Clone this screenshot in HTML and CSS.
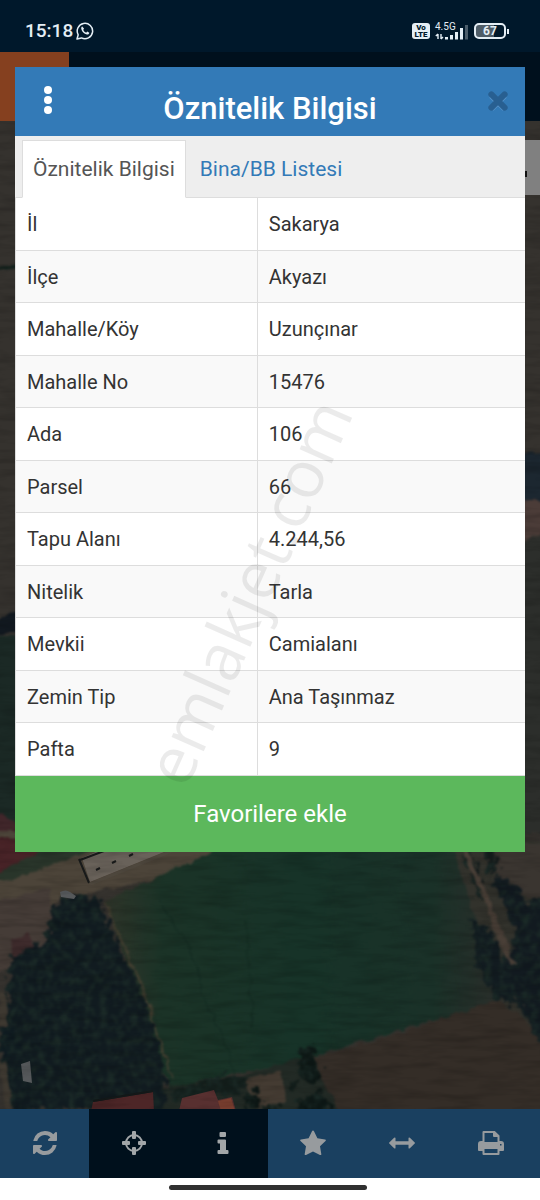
FILE: index.html
```html
<!DOCTYPE html>
<html lang="tr">
<head>
<meta charset="utf-8">
<meta name="viewport" content="width=device-width, initial-scale=1">
<title>Öznitelik Bilgisi</title>
<link rel="stylesheet" href="styles.css">
</head>
<body>
<header class="status">
  <div class="status-left">
    <span class="clock">15:18</span>
    <svg class="icon-chat" viewBox="0 0 18 18" aria-hidden="true">
      <path d="M1 17l1.200-4.200A7.700 7.700 0 1 1 5.400 15.900z" fill="none" stroke="#e4eef5" stroke-width="1.500" stroke-linejoin="round"/>
      <path d="M6.300 4.600c-.9.300-1.300 1.300-1 2.300.7 2.700 2.700 4.800 5.600 5.600 1.200.3 2.300-.4 2.400-1.700l-2.100-1.200-1.100 1.100C8.500 10 7.600 9 7.200 7.800l.9-1z" fill="#e4eef5"/>
    </svg>
  </div>
  <div class="status-right">
    <span class="volte"><span>Vo</span><span>LTE</span></span>
    <span class="network">
      <span class="network-type">4.5G</span>
      <svg class="icon-signal" viewBox="0 0 34 16" aria-hidden="true">
        <path d="M3 15v-5M.8 12L3 10M6 10v5M6 15l2-2" stroke="#e4eef5" stroke-width="1.400" fill="none"/>
        <path d="M10 13h3v2.500h-3zM15 11h3v4.500h-3zM20 8h3v7.500h-3zM25 4h3v11.500h-3z" fill="#e4eef5"/>
        <path d="M30 1h3v14.500h-3z" fill="#4b5d6b"/>
      </svg>
    </span>
    <span class="battery"><span class="battery-level">67</span></span>
  </div>
</header>

<main class="app">
  <div class="app-bar"><div class="brand"></div></div>
  <div class="map">
    <svg class="satellite" viewBox="0 121 540 988" preserveAspectRatio="xMidYMax slice" aria-hidden="true">
      <defs>
        <filter id="soft" x="-10%" y="-10%" width="120%" height="120%" color-interpolation-filters="sRGB">
          <feTurbulence type="fractalNoise" baseFrequency="0.08" numOctaves="3" seed="4" result="n"/>
          <feDisplacementMap in="SourceGraphic" in2="n" scale="9" xChannelSelector="R" yChannelSelector="G"/>
          <feGaussianBlur stdDeviation="1"/>
        </filter>
        <filter id="trees" x="-5%" y="-5%" width="110%" height="110%" color-interpolation-filters="sRGB">
          <feTurbulence type="fractalNoise" baseFrequency="0.13" numOctaves="3" seed="9" result="n"/>
          <feDisplacementMap in="SourceGraphic" in2="n" scale="18" xChannelSelector="R" yChannelSelector="G" result="s"/>
          <feColorMatrix in="n" values="0 0 0 0 0.11  0 0 0 0 0.17  0 0 0 0 0.155  2.500 0 0 0 -1" result="t"/>
          <feComposite in="t" in2="s" operator="in" result="c"/>
          <feMerge result="m"><feMergeNode in="s"/><feMergeNode in="c"/></feMerge>
          <feGaussianBlur in="m" stdDeviation="1"/>
        </filter>
        <filter id="grain" x="0" y="0" width="100%" height="100%" color-interpolation-filters="sRGB">
          <feTurbulence type="fractalNoise" baseFrequency="0.025 0.14" numOctaves="3" seed="2"/>
          <feColorMatrix values="0 0 0 0 0  0 0 0 0 0  0 0 0 0 0  1.200 0 0 0 -.5"/>
        </filter>
        <linearGradient id="field" x1="0" y1="0" x2="1" y2="0">
          <stop offset="0" stop-color="#2e3429"/><stop offset=".14" stop-color="#1b3327"/>
          <stop offset=".5" stop-color="#173328"/><stop offset=".82" stop-color="#1a3128"/><stop offset="1" stop-color="#2b2d2a"/>
        </linearGradient>
      </defs>
      <rect y="121" width="540" height="988" fill="#35322e"/>
      <g filter="url(#soft)">
        <path d="M-5 267L20 264v4l-25 3z" fill="#12211c"/>
        <path d="M-5 622l25-14v22l-25 6z" fill="#121920"/>
        <path d="M-5 636h25v200l-25-20z" fill="#1b2925"/>
        <path d="M-5 812l25 12v24l-25-8z" fill="#40262a"/>
        <path d="M522 456q12-8 24 0v42l-24 6z" fill="#1c2730"/>
        <path d="M522 500h24v30l-24 14z" fill="#4b3c38"/>
        <path d="M522 545l24-12v300h-24z" fill="#2c2e2b"/>
        <path d="M-10 830h240v35L60 898l-70 80z" fill="#4c4439"/>
        <path d="M-10 838h62l-8 21-28 16-26-3z" fill="#482327"/>
        <path d="M44 848h52l-67 26-39 10v-7z" fill="#29352a"/>
        <path d="M-10 902l60-13 4 42-16 34-48 10z" fill="#453c37"/>
        <path d="M12 940l18-6 8 12-12 14-15-4z" fill="#3e2b2c"/>
      </g>
      <path d="M82 858l8 24 74-30v-12h-40z" fill="#69625a"/>
      <path d="M79 859l10 24M80 860l40-15M96 870l4-2M112 863l4-2M129 856l4-2" stroke="#191b1b" stroke-width="2"/>
      <path d="M90 884l82-33" stroke="#4e473d" stroke-width="3"/>
      <g filter="url(#soft)">
        <path d="M440 840h110v260l-30-40z" fill="#32322c"/>
        <path d="M480 858l14-15h56v60l-30-8z" fill="#3a3530"/>
        <path d="M106 901L238 840h210l26 74 30 88-90 24-104 32-142 31-23-70z" fill="url(#field)"/>
        <path d="M105 901l39 90 28 90" fill="none" stroke="#443f31" stroke-width="2"/>
        <path d="M310 1060l103-31 86-30 56 50v70H342z" fill="#342d27"/>
        <path d="M158 900l36 55 9 38 28 65 6 30M246 920l7 108" fill="none" stroke="#132a21" stroke-width="1"/>
        <path d="M125 1092l111-14 72-23 35 64H120z" fill="#222a25"/>
        <path d="M242 1080l40-10 4 30-28 9z" fill="#443b32"/>
      </g>
      <g filter="url(#trees)">
        <path d="M50 907l14-10 34 2 10 26 16 35 14 24 15 40 14 58-4 28H12L3 1060l7-100 37-20z" fill="#111b20"/>
        <path d="M470 920l18 4 18 40 12 34-14 8-26-36z" fill="#121b20"/>
        <path d="M464 852l8 0 14 46-6 4zM482 848h14l2 26-6 2z" fill="#151c1c"/>
        <path d="M490 886l10-10 20 14 6 12 26-10v170l-32-55-16-44 12-30-16-36z" fill="#121a20"/>
        <path d="M298 1050l15-5 8 26-8 15-13-8zM244 1095l10-5 6 8-4 11h-12zM298 1100l24-10 16 29h-40z" fill="#0d1715"/>
        <path d="M0 1020l14 10 6 20-20 10z" fill="#0f1a20"/>
        <path d="M170 1090l60-14 20 2-8 14-28 4-38 6z" fill="#141f1c"/>
        <circle cx="292" cy="1085" r="5" fill="#101a17"/><circle cx="270" cy="1108" r="7" fill="#101a17"/>
      </g>
      <g filter="url(#soft)">
        <path d="M464 850l20 42 22 60 8 12" fill="none" stroke="#493f37" stroke-width="6"/>
        <path d="M2 990v38M2 1062l8 50" fill="none" stroke="#3e3931" stroke-width="6"/>
      </g>
      <path d="M60 892q6-3 10 0l6 4-2 3-13-2zM21 1064l9-3 2 22-9-2z" fill="#56595b"/>
      <path d="M93 1102l60-10 1 19H91z" fill="#4d2627"/>
      <path d="M93 1101l60-10" stroke="#151a1a" stroke-width="2"/>
      <path d="M182 1098l32-8 4 10 14-3 4 14h-57z" fill="#583030"/>
      <path d="M218 1101l13-3 4 13h-14z" fill="#773d2e"/>
      <rect y="121" width="540" height="988" filter="url(#grain)" opacity=".28"/>
    </svg>
    <div class="map-tool" aria-hidden="true"><span></span></div>
  </div>
  <nav class="toolbar" aria-label="Harita araçları">
    <button type="button" aria-label="Yenile">
      <svg viewBox="0 0 1536 1536"><path d="M1511 928q0 5-1 7-64 268-268 434.500t-478 166.500q-146 0-282.500-55t-243.500-157l-129 129q-19 19-45 19t-45-19-19-45v-448q0-26 19-45t45-19h448q26 0 45 19t19 45-19 45l-137 137q71 66 161 102t187 36q134 0 250-65t186-179q11-17 53-117 8-23 30-23h192q13 0 22.500 9.500t9.500 22.500zm25-800v448q0 26-19 45t-45 19h-448q-26 0-45-19t-19-45 19-45l138-138q-148-137-349-137-134 0-250 65t-186 179q-11 17-53 117-8 23-30 23h-199q-13 0-22.500-9.500t-9.500-22.500v-7q65-268 270-434.500t480-166.500q146 0 284 55.500t245 156.500l130-129q19-19 45-19t45 19 19 45z"/></svg>
    </button>
    <button type="button" class="dark" aria-label="Konum">
      <svg viewBox="0 0 24 24"><circle cx="12" cy="12" r="8" fill="none" stroke="currentColor" stroke-width="2"/><path d="M10 1q0-1 1-1h2q1 0 1 1v6q0 1-1 1h-2q-1 0-1-1zM10 17q0-1 1-1h2q1 0 1 1v6q0 1-1 1h-2q-1 0-1-1zM1 10h6q1 0 1 1v2q0 1-1 1H1q-1 0-1-1v-2q0-1 1-1zM17 10h6q1 0 1 1v2q0 1-1 1h-6q-1 0-1-1v-2q0-1 1-1z"/></svg>
    </button>
    <button type="button" class="dark" aria-label="Bilgi">
      <svg viewBox="0 0 24 24"><path d="M9.500 1h4.500q1 0 1 1v3q0 1-1 1H9.500q-1 0-1-1V2q0-1 1-1zM7.500 8.500H14q1 0 1 1V19h1.500q1 0 1 1v2q0 1-1 1h-9q-1 0-1-1v-2q0-1 1-1H9v-6.500H7.500q-1 0-1-1v-2q0-1 1-1z"/></svg>
    </button>
    <button type="button" aria-label="Favoriler">
      <svg class="wide" viewBox="0 0 26 26"><path d="M13 .5q.7 0 1 .8l3.400 7 7.600 1.100q1.500.4.500 1.500l-5.500 5.400 1.300 7.600q.2 1.600-1.300 1.100L13 21.400 6 25q-1.500.5-1.300-1.100L6 16.300.5 10.900q-1-1.100.5-1.500l7.600-1.100 3.400-7q.3-.8 1-.8z"/></svg>
    </button>
    <button type="button" aria-label="Ölçüm">
      <svg class="wide" viewBox="0 0 28 28"><path d="M.3 13.400L5.500 8.300q1.500-.9 1.500.7v3h14V9q0-1.600 1.500-.7l5.200 5.100q.6.600 0 1.200l-5.200 5.100q-1.500.9-1.500-.7v-3H7v3q0 1.600-1.500.7L.3 14.600q-.6-.6 0-1.200z"/></svg>
    </button>
    <button type="button" aria-label="Yazdır">
      <svg class="wide" viewBox="0 0 26 26"><path fill-rule="evenodd" d="M5.500 1h11.300L21.500 5.500V11H23q3 0 3 3v6q0 1-1 1h-3.500v3q0 1-1 1H5.500q-1 0-1-1v-3H1q-1 0-1-1v-6q0-3 3-3h1.500V2q0-1 1-1zM6.500 3v9h13V7H16q-1 0-1-1V3zM6.500 19v4h13v-4zM22 14v1.500h1.500V14z"/></svg>
    </button>
  </nav>
</main>

<footer class="gesture"><span></span></footer>

<section class="modal" role="dialog" aria-labelledby="modal-title">
  <header class="modal-head">
    <button type="button" class="menu" aria-label="Menü"><i></i><i></i><i></i></button>
    <h1 id="modal-title">Öznitelik Bilgisi</h1>
    <button type="button" class="close" aria-label="Kapat">
      <svg viewBox="0 0 20 20"><path d="M4 4l12 12M16 4L4 16" transform="translate(0 1)" stroke="#5792c8" stroke-width="5.500"/><path d="M4 4l12 12M16 4L4 16" stroke="#285f91" stroke-width="5.500" stroke-linecap="round"/></svg>
    </button>
  </header>
  <nav class="tabs">
    <a class="tab active" href="#oznitelik">Öznitelik Bilgisi</a>
    <a class="tab" href="#bina">Bina/BB Listesi</a>
  </nav>
  <table class="details">
    <tbody>
      <tr><th scope="row">İl</th><td>Sakarya</td></tr>
      <tr><th scope="row">İlçe</th><td>Akyazı</td></tr>
      <tr><th scope="row">Mahalle/Köy</th><td>Uzunçınar</td></tr>
      <tr><th scope="row">Mahalle No</th><td>15476</td></tr>
      <tr><th scope="row">Ada</th><td>106</td></tr>
      <tr><th scope="row">Parsel</th><td>66</td></tr>
      <tr><th scope="row">Tapu Alanı</th><td>4.244,56</td></tr>
      <tr><th scope="row">Nitelik</th><td>Tarla</td></tr>
      <tr><th scope="row">Mevkii</th><td>Camialanı</td></tr>
      <tr><th scope="row">Zemin Tip</th><td>Ana Taşınmaz</td></tr>
      <tr><th scope="row">Pafta</th><td>9</td></tr>
    </tbody>
  </table>
  <button type="button" class="favorite">Favorilere ekle</button>
  <div class="watermark"><span>emlakjet.com</span></div>
</section>
</body>
</html>
```

FILE: styles.css
```css
* { box-sizing: border-box; }

body {
  margin: 0;
  min-height: 100vh;
  display: flex;
  flex-direction: column;
  position: relative;
  background: #fff;
  color: #333;
  font-family: Roboto, "Liberation Sans", sans-serif;
  font-size: 20px;
}

button {
  border: 0;
  padding: 0;
  background: none;
  font: inherit;
  color: inherit;
}

svg { display: block; }

/* Phone status bar */
.status {
  height: 52px;
  padding: 10px 31px 0 25px;
  display: flex;
  justify-content: space-between;
  align-items: center;
  background: #00182b;
  color: #e4eef5;
}

.status-left, .status-right {
  display: flex;
  align-items: center;
}
.status-left { gap: 3px; }
.status-right { gap: 5px; }

.clock { font-size: 19px; font-weight: 500; line-height: 20px; }
.icon-chat { width: 18px; height: 18px; }

.volte {
  display: flex;
  flex-direction: column;
  align-items: center;
  width: 18px;
  padding: 1px 0;
  border-radius: 3px;
  background: #e4eef5;
  color: #00182b;
  font-size: 8px;
  font-weight: 900;
  line-height: 7px;
}

.network {
  display: grid;
  width: 34px;
  height: 18px;
}
.network > * { grid-area: 1 / 1; }
.network-type { font-size: 10px; line-height: 9px; }
.icon-signal { width: 34px; height: 16px; align-self: end; }

.battery {
  display: flex;
  align-items: center;
}
.battery::after {
  content: "";
  width: 2px;
  height: 5px;
  margin-left: 1px;
  background: #e4eef5;
}
.battery-level {
  width: 32px;
  border: 2px solid #e4eef5;
  border-radius: 5px;
  background: linear-gradient(90deg, #4f5d68 66%, #00182b 66%);
  font-size: 12px;
  font-weight: 700;
  line-height: 12px;
  text-align: center;
}

/* Application behind the dialog */
.app {
  flex: 1;
  display: flex;
  flex-direction: column;
}

.app-bar { height: 69px; background: #00101d; }
.brand { width: 69px; height: 100%; background: #85401f; }

.map {
  flex: 1;
  position: relative;
  overflow: hidden;
  background: #35322e;
}
.satellite {
  position: absolute;
  inset: 0;
  width: 100%;
  height: 100%;
}
.map-tool {
  position: absolute;
  top: 19px;
  right: 0;
  width: 32px;
  height: 55px;
  display: flex;
  align-items: center;
  justify-content: center;
  background: #808080;
}
.map-tool span { width: 6px; height: 6px; margin-top: 12px; background: #111; }

.toolbar {
  display: flex;
  height: 69px;
  padding-right: 4px;
  background: #1a4060;
  color: #979b9e;
}
.toolbar button {
  flex: 1;
  display: flex;
  align-items: center;
  justify-content: center;
  padding-bottom: 2px;
}
.toolbar .dark { background: #00101c; color: #a2a6a8; }
.toolbar svg { width: 24px; height: 24px; fill: currentColor; }
.toolbar .wide { width: 26px; height: 26px; }

.gesture {
  height: 22px;
  padding: 7px 11px 7px 7px;
  display: flex;
  justify-content: center;
  background: #fff;
}
.gesture span {
  width: 38%;
  height: 5px;
  border-radius: 3px;
  background: #303030;
}

/* Dialog */
.modal {
  position: absolute;
  top: 67px;
  left: 15px;
  right: 15px;
  background: #fff;
}

.modal-head {
  display: grid;
  grid-template-columns: 66px 1fr 66px;
  height: 69px;
  background: #337ab7;
  color: #fff;
}
.modal-head h1 {
  margin: 0;
  padding-top: 15px;
  font-size: 31px;
  font-weight: 500;
  line-height: 54px;
  text-align: center;
  white-space: nowrap;
}
.menu {
  display: flex;
  flex-direction: column;
  align-items: center;
  justify-content: center;
  gap: 2px;
  padding-bottom: 4px;
}
.menu i { width: 8px; height: 8px; border-radius: 50%; background: #fff; }
.close {
  display: flex;
  align-items: center;
  justify-content: flex-end;
  padding: 0 16px 2px 0;
}
.close svg { width: 22px; height: 22px; overflow: visible; }

.tabs {
  display: flex;
  height: 62px;
  padding: 4px 7px 0;
  background: #eee;
  border-bottom: 1px solid #ddd;
  font-size: 21px;
}
.tab {
  padding: 0 13px;
  border: 1px solid transparent;
  color: #337ab7;
  line-height: 56px;
  text-decoration: none;
  white-space: nowrap;
}
.tab.active {
  padding: 0 10px;
  margin-bottom: -1px;
  border-color: #ddd;
  border-bottom-color: #fff;
  background: #fff;
  color: #555;
}

.details {
  width: 100%;
  table-layout: fixed;
  border-collapse: separate;
  border-spacing: 0;
  border-left: 1px solid #ddd;
}
.details th, .details td {
  height: 53px;
  padding: 0 11px;
  border-bottom: 1px solid #ddd;
  font-weight: 400;
  text-align: left;
}
.details tr:nth-child(even) > * { height: 52px; background: #f9f9f9; }
.details th { width: 47.5%; border-right: 1px solid #ddd; }

.favorite {
  display: block;
  width: 100%;
  height: 76px;
  background: #5cb85c;
  color: #fff;
  font-size: 24px;
}

.watermark {
  position: absolute;
  inset: 262px 46px 0 0;
  display: flex;
  align-items: center;
  justify-content: center;
  pointer-events: none;
}
.watermark span {
  color: rgba(0, 0, 0, 0.08);
  font-family: "Open Sans", "Noto Sans", sans-serif;
  font-size: 66px;
  line-height: 80px;
  transform: rotate(-66deg);
}
```
